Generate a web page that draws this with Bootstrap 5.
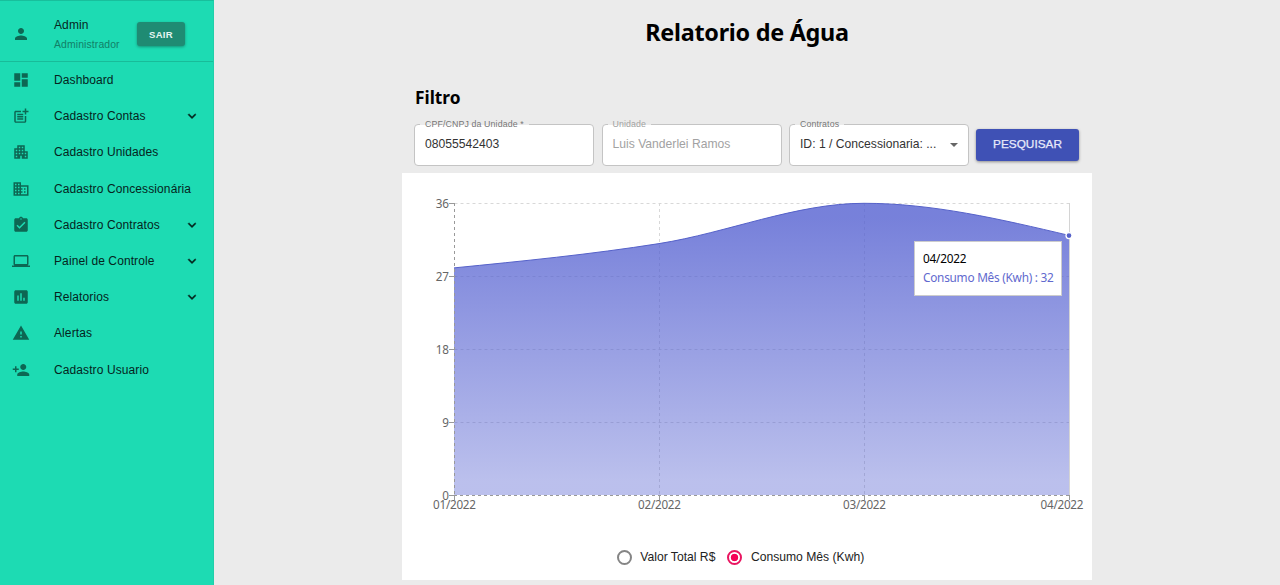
<!DOCTYPE html>
<html lang="pt-BR">
<head>
<meta charset="utf-8">
<meta name="viewport" content="width=device-width, initial-scale=1">
<title>Relatorio de Água</title>
<link href="https://cdn.jsdelivr.net/npm/bootstrap@5.3.0/dist/css/bootstrap.min.css" rel="stylesheet">
<style>
body{background:#ebebeb;font-family:"Liberation Sans",Arial,sans-serif;font-size:12px;color:#000;height:585px}
.side{width:214px;background:#1ddbb3;border-top:1px solid #18bf9c;border-right:1px solid #20cfaa}
.profile{height:61px;padding-left:12px;border-bottom:1px solid #18bc99;padding-top:5px}
.ic{width:18px;height:18px;fill:#0d6753;flex:none}
.who{width:83px;margin-left:24px;margin-top:2px;line-height:19px;color:#06271f;letter-spacing:.1px}
.role{font-size:10.4px;color:#118067;letter-spacing:.12px}
.exit{width:48px;height:24px;background:#1f8b73;color:#e5f5f1;font-size:9.5px;font-weight:700;letter-spacing:.3px;border-radius:3px;box-shadow:0 1px 3px #0005;line-height:23px;margin-top:1px}
.menu a{height:36.2px;padding:0 13px 0 12px;color:#05241d;text-decoration:none;letter-spacing:.1px}
.menu span{margin-left:24px}
.chev{width:16px;height:16px;fill:#04251d}
.seg{font-family:"Noto Sans","Open Sans",sans-serif}
h1{font-size:23.4px;font-weight:700;line-height:32px;padding-top:16px;letter-spacing:-.28px}
.report{width:690px}
h2{font-size:17.3px;font-weight:700;line-height:24px;margin-top:38px;padding-left:13px}
.filters{padding-left:12px;gap:7.5px;height:43px;margin-top:13px}
.field{width:180px;height:42px;min-width:0;border:1px solid #c4c4c4;border-radius:4px;background:#fff;padding:0 10px;color:#333;font-size:12.15px}
.field label{left:5px;top:-7px;padding:0 5px;font-size:8.8px;line-height:12px;color:#777;letter-spacing:.12px;background:linear-gradient(#ebebeb 58%,#fff 58%);white-space:nowrap}
.off,.off label{color:#a2a2a2}
.search{width:103px;height:32px;background:#3f51b5;color:#e8eafa;font-size:11.8px;border-radius:3px;box-shadow:0 1px 3px #0006;line-height:31px;margin-left:-.5px;-webkit-text-stroke:.25px #e8eafa}
.panel{height:407px;background:#fff;margin-top:7px}
.plot text{font-size:11.7px;fill:#666}
.tip{left:512px;top:68px;width:148px;height:55px;background:#fff;border:1px solid #ccc;padding:7px 8px;line-height:19px;font-size:11.8px;white-space:nowrap}
.tip div{color:#6169ce;letter-spacing:-.24px}
.tip span{letter-spacing:-.25px}
.choices{padding-top:9px;padding-right:13px;color:#222;font-size:12.15px}
.dot{width:15px;height:15px;border:2px solid #858585;border-radius:50%;margin-right:8.5px}
.dot.on{border-color:#e91560;background:radial-gradient(circle,#f50057 3.4px,#fff 4.1px)}
</style>
</head>
<body class="d-flex overflow-hidden">
<aside class="side flex-shrink-0">
 <div class="profile d-flex align-items-center">
  <svg class="ic" viewBox="0 0 24 24"><path d="M12 12c2.21 0 4-1.79 4-4s-1.79-4-4-4-4 1.79-4 4 1.79 4 4 4zm0 2c-2.67 0-8 1.34-8 4v2h16v-2c0-2.66-5.33-4-8-4z"/></svg>
  <div class="who">Admin<div class="role">Administrador</div></div>
  <button class="btn exit border-0 p-0">SAIR</button>
 </div>
 <nav class="menu">
  <a href="#" class="d-flex align-items-center"><svg class="ic" viewBox="0 0 24 24"><path d="M3 13h8V3H3v10zm0 8h8v-6H3v6zm10 0h8V11h-8v10zm0-18v6h8V3h-8z"/></svg><span>Dashboard</span></a>
  <a href="#" class="d-flex align-items-center"><svg class="ic" viewBox="0 0 24 24"><path d="M17 19.22H5V7h7V5H5c-1.1 0-2 .9-2 2v12c0 1.1.9 2 2 2h12c1.1 0 2-.9 2-2v-7h-2v7.22z"/><path d="M19 2h-2v3h-3v2h3v2.99h2V7h3V5h-3V2zM7 9h8v2H7zM7 12v2h8v-2H7zM7 15h8v2H7z"/></svg><span>Cadastro Contas</span><svg class="chev ms-auto" viewBox="0 0 24 24"><path d="M16.59 8.59 12 13.17 7.41 8.59 6 10l6 6 6-6z" stroke="#04251d" stroke-width=".6"/></svg></a>
  <a href="#" class="d-flex align-items-center"><svg class="ic" viewBox="0 0 24 24"><path d="M17 11V3H7v4H3v14h8v-4h2v4h8V11h-4zM7 19H5v-2h2v2zm0-4H5v-2h2v2zm0-4H5V9h2v2zm4 4H9v-2h2v2zm0-4H9V9h2v2zm0-4H9V5h2v2zm4 8h-2v-2h2v2zm0-4h-2V9h2v2zm0-4h-2V5h2v2zm4 12h-2v-2h2v2zm0-4h-2v-2h2v2z"/></svg><span>Cadastro Unidades</span></a>
  <a href="#" class="d-flex align-items-center"><svg class="ic" viewBox="0 0 24 24"><path d="M12 7V3H2v18h20V7H12zM6 19H4v-2h2v2zm0-4H4v-2h2v2zm0-4H4V9h2v2zm0-4H4V5h2v2zm4 12H8v-2h2v2zm0-4H8v-2h2v2zm0-4H8V9h2v2zm0-4H8V5h2v2zm10 12h-8v-2h2v-2h-2v-2h2v-2h-2V9h8v10zm-2-8h-2v2h2v-2zm0 4h-2v2h2v-2z"/></svg><span>Cadastro Concessionária</span></a>
  <a href="#" class="d-flex align-items-center"><svg class="ic" viewBox="0 0 24 24"><path d="M19 3h-4.18C14.4 1.84 13.3 1 12 1c-1.3 0-2.4.84-2.82 2H5c-1.1 0-2 .9-2 2v14c0 1.1.9 2 2 2h14c1.1 0 2-.9 2-2V5c0-1.1-.9-2-2-2zm-7 0c.55 0 1 .45 1 1s-.45 1-1 1-1-.45-1-1 .45-1 1-1zm-2 14-4-4 1.41-1.41L10 14.17l6.59-6.59L18 9l-8 8z"/></svg><span>Cadastro Contratos</span><svg class="chev ms-auto" viewBox="0 0 24 24"><path d="M16.59 8.59 12 13.17 7.41 8.59 6 10l6 6 6-6z" stroke="#04251d" stroke-width=".6"/></svg></a>
  <a href="#" class="d-flex align-items-center"><svg class="ic" viewBox="0 0 24 24"><path d="M20 18c1.1 0 1.99-.9 1.99-2L22 6c0-1.1-.9-2-2-2H4c-1.1 0-2 .9-2 2v10c0 1.1.9 2 2 2H0v2h24v-2h-4zM4 6h16v10H4V6z"/></svg><span>Painel de Controle</span><svg class="chev ms-auto" viewBox="0 0 24 24"><path d="M16.59 8.59 12 13.17 7.41 8.59 6 10l6 6 6-6z" stroke="#04251d" stroke-width=".6"/></svg></a>
  <a href="#" class="d-flex align-items-center"><svg class="ic" viewBox="0 0 24 24"><path d="M19 3H5c-1.1 0-2 .9-2 2v14c0 1.1.9 2 2 2h14c1.1 0 2-.9 2-2V5c0-1.1-.9-2-2-2zM9 17H7v-7h2v7zm4 0h-2V7h2v10zm4 0h-2v-4h2v4z"/></svg><span>Relatorios</span><svg class="chev ms-auto" viewBox="0 0 24 24"><path d="M16.59 8.59 12 13.17 7.41 8.59 6 10l6 6 6-6z" stroke="#04251d" stroke-width=".6"/></svg></a>
  <a href="#" class="d-flex align-items-center"><svg class="ic" viewBox="0 0 24 24"><path d="M1 21h22L12 2 1 21zm12-3h-2v-2h2v2zm0-4h-2v-4h2v4z"/></svg><span>Alertas</span></a>
  <a href="#" class="d-flex align-items-center"><svg class="ic" viewBox="0 0 24 24"><path d="M15 12c2.21 0 4-1.79 4-4s-1.79-4-4-4-4 1.79-4 4 1.79 4 4 4zm-9-2V7H4v3H1v2h3v3h2v-3h3v-2H6zm9 4c-2.67 0-8 1.34-8 4v2h16v-2c0-2.66-5.33-4-8-4z"/></svg><span>Cadastro Usuario</span></a>
 </nav>
</aside>
<main class="flex-grow-1">
 <h1 class="seg text-center mb-0">Relatorio de Água</h1>
 <div class="report mx-auto">
  <h2 class="seg mb-0">Filtro</h2>
  <div class="filters d-flex align-items-center">
   <div class="field position-relative d-flex align-items-center">08055542403<label class="position-absolute">CPF/CNPJ da Unidade *</label></div>
   <div class="field off position-relative d-flex align-items-center">Luis Vanderlei Ramos<label class="position-absolute">Unidade</label></div>
   <div class="field position-relative d-flex align-items-center">ID: 1 / Concessionaria: ...<label class="position-absolute">Contratos</label><svg class="ms-auto" width="8" height="4" viewBox="0 0 8 4"><path d="M0 0h8L4 4z" fill="#666"/></svg></div>
   <button class="btn search border-0 p-0">PESQUISAR</button>
  </div>
  <section class="panel position-relative">
   <svg class="plot seg d-block" width="690" height="366" viewBox="402 173 690 366">
    <defs><linearGradient id="fade" x1="0" y1="0" x2="0" y2="1"><stop offset=".05" stop-color="#5561d1" stop-opacity=".8"/><stop offset=".95" stop-color="#5561d1" stop-opacity=".4"/></linearGradient></defs>
    <g stroke="#d8d8d8" stroke-dasharray="3 3" fill="none"><path d="M454.5 203.5H1069M454.5 276.5H1069M454.5 349.5H1069M454.5 422.5H1069M659.5 203V495M864.5 203V495"/></g>
    <path d="M1069.5 203V495" stroke="#d4d4d4"/>
    <path d="M454 267.9C522.3 261.1 590.7 254.4 659 243.6S795.7 203.3 864 203.3S1000.7 219.2 1069 235.4V495H454Z" fill="url(#fade)"/>
    <path d="M454 267.9C522.3 261.1 590.7 254.4 659 243.6S795.7 203.3 864 203.3S1000.7 219.2 1069 235.4" fill="none" stroke="#5561c9"/>
    <g stroke="#999" fill="none"><path d="M454.5 203V495M454 495.5H1069" stroke-dasharray="3 3"/><path d="M449 203.5h5M449 276.5h5M449 349.5h5M449 422.5h5M449 495.5h5M454.5 495v5M659.5 495v5M864.5 495v5M1069.5 495v5"/></g>
    <circle cx="1069" cy="235.6" r="3" fill="#5561c9" stroke="#fff" stroke-width="1.3"/>
    <g text-anchor="end"><text x="449" y="208">36</text><text x="449" y="281">27</text><text x="449" y="354">18</text><text x="449" y="427">9</text><text x="449" y="500">0</text></g>
    <g text-anchor="middle"><text x="454.5" y="509.3" textLength="43">01/2022</text><text x="659.5" y="509.3" textLength="43">02/2022</text><text x="864.5" y="509.3" textLength="43">03/2022</text><text x="1062" y="509.3" textLength="43">04/2022</text></g>
   </svg>
   <div class="tip seg position-absolute"><span>04/2022</span><div>Consumo Mês (Kwh) : 32</div></div>
   <div class="choices d-flex justify-content-center align-items-center">
    <i class="dot"></i><span class="me-2 pe-1">Valor Total R$</span><i class="dot on"></i><span>Consumo Mês (Kwh)</span>
   </div>
  </section>
 </div>
</main>
<script src="https://cdn.jsdelivr.net/npm/bootstrap@5.3.0/dist/js/bootstrap.bundle.min.js"></script>
</body>
</html>
